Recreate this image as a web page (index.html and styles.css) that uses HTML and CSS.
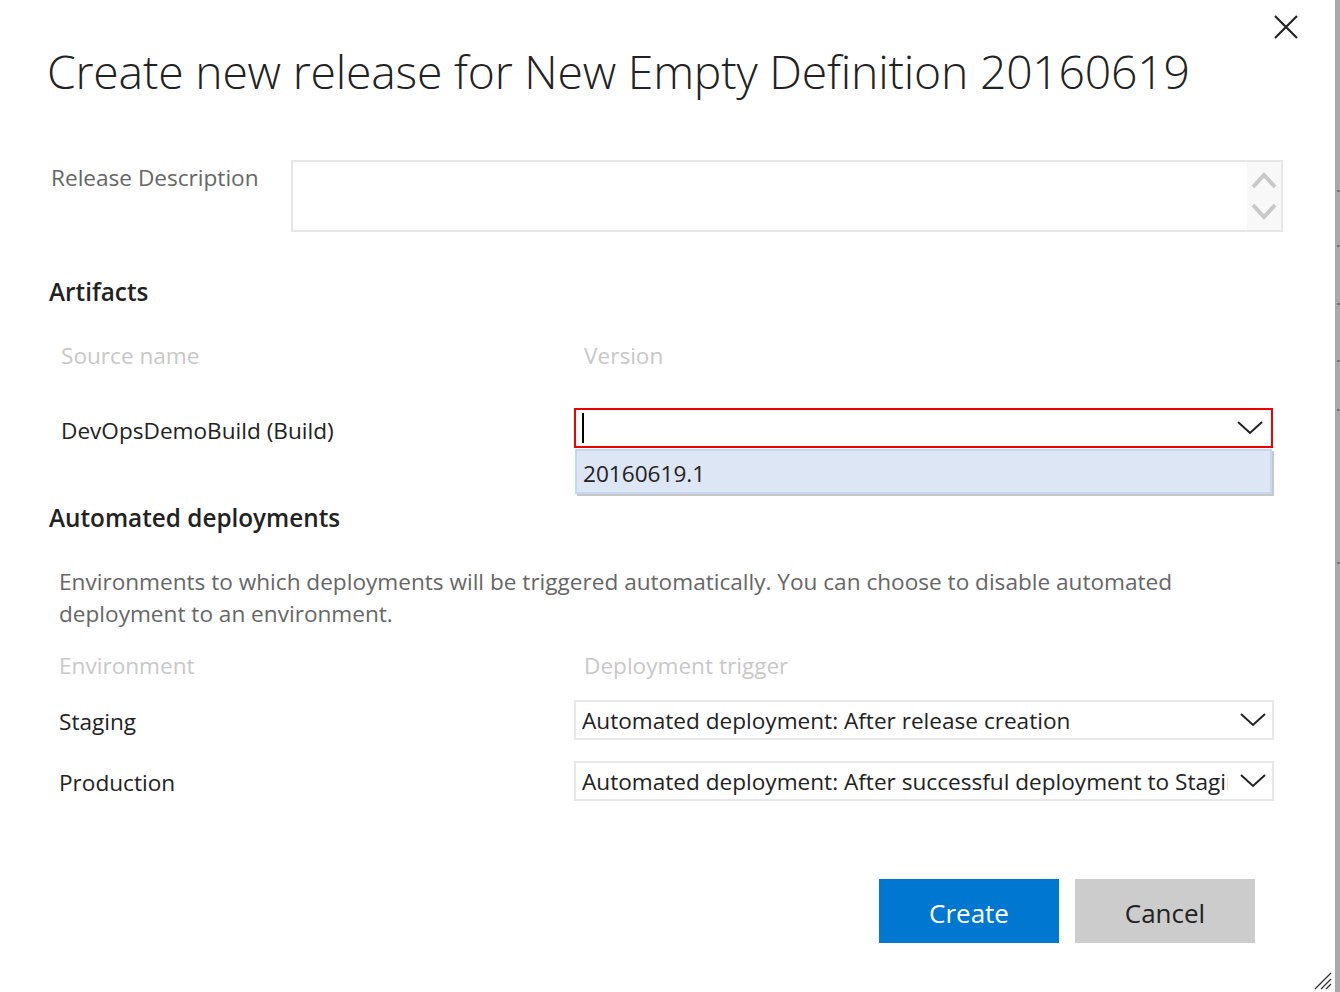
FILE: index.html
```html
<!DOCTYPE html>
<html>
<head>
<meta charset="utf-8">
<link rel="stylesheet" href="styles.css">
</head>
<body>
<div class="page">
  <div class="dialog">
    <button class="close" aria-label="Close">
      <svg width="24" height="24" viewBox="0 0 24 24"><path d="M1 1L23 23M23 1L1 23" stroke="#222" stroke-width="2.2" fill="none"/></svg>
    </button>
    <h1 class="title">Create new release for New Empty Definition 20160619</h1>

    <div class="desc-row">
      <label class="desc-label">Release Description</label>
      <div class="textarea">
        <div class="spin">
          <svg width="26" height="22" viewBox="0 0 26 22"><path d="M2 18L13 6L24 18" stroke="#c9c9c9" stroke-width="4" fill="none"/></svg>
          <svg width="26" height="22" viewBox="0 0 26 22"><path d="M2 4L13 16L24 4" stroke="#c9c9c9" stroke-width="4" fill="none"/></svg>
        </div>
      </div>
    </div>

    <h2 class="section">Artifacts</h2>
    <div class="grid artifacts">
      <div class="colhead">Source name</div>
      <div class="colhead right">Version</div>
      <div class="cell name">DevOpsDemoBuild (Build)</div>
      <div class="cell combo-wrap">
        <div class="combo focused">
          <span class="caret"></span>
          <svg class="chev" width="26" height="14" viewBox="0 0 26 14"><path d="M1 1L13 12L25 1" stroke="#222" stroke-width="2" fill="none"/></svg>
        </div>
        <div class="dropdown"><div class="option">20160619.1</div></div>
      </div>
    </div>

    <h2 class="section auto">Automated deployments</h2>
    <p class="info">Environments to which deployments will be triggered automatically. You can choose to disable automated deployment to an environment.</p>
    <div class="grid envs">
      <div class="colhead">Environment</div>
      <div class="colhead right">Deployment trigger</div>
      <div class="cell name">Staging</div>
      <div class="cell">
        <div class="select"><span class="sel-text">Automated deployment: After release creation</span>
          <svg class="chev" width="26" height="14" viewBox="0 0 26 14"><path d="M1 1L13 12L25 1" stroke="#222" stroke-width="2" fill="none"/></svg>
        </div>
      </div>
      <div class="cell name">Production</div>
      <div class="cell">
        <div class="select"><span class="sel-text">Automated deployment: After successful deployment to Staging</span>
          <svg class="chev" width="26" height="14" viewBox="0 0 26 14"><path d="M1 1L13 12L25 1" stroke="#222" stroke-width="2" fill="none"/></svg>
        </div>
      </div>
    </div>

    <div class="actions">
      <button class="btn primary">Create</button>
      <button class="btn secondary">Cancel</button>
    </div>
    <svg class="grip" width="20" height="20" viewBox="0 0 20 20"><path d="M19 3L3 19M19 9L9 19M19 14L14 19" stroke="#333" stroke-width="1.3" fill="none"/></svg>
  </div>
  <div class="edge"></div>
</div>
</body>
</html>
```

FILE: styles.css
```css
* { box-sizing: border-box; }
html, body { margin: 0; padding: 0; background: #fff; }
body {
  font-family: "Open Sans", "Noto Sans", "Liberation Sans", sans-serif;
  color: #222;
}
.page { display: flex; width: 1340px; height: 992px; overflow: hidden; }
.dialog {
  position: relative;
  flex: 1;
  padding: 0 0 0 49px;
}
.edge {
  width: 5px;
  background-color: #a9a9a9;
  background-image:
    linear-gradient(#777, #777),
    linear-gradient(#777, #777),
    linear-gradient(#777, #777),
    linear-gradient(#777, #777),
    linear-gradient(#777, #777),
    linear-gradient(#777, #777);
  background-size: 3px 2px;
  background-repeat: no-repeat;
  background-position: 2px 190px, 2px 245px, 2px 303px, 2px 360px, 2px 409px, 2px 562px;
}
.close {
  position: absolute;
  top: 15px;
  right: 37px;
  border: 0;
  background: none;
  padding: 0;
  width: 24px;
  height: 24px;
}
.title {
  margin: 0 0 0 -2px;
  padding-top: 39px;
  font-size: 46.3px;
  font-weight: 300;
  line-height: 66px;
  color: #222;
  letter-spacing: -0.2px;
  white-space: nowrap;
}
.desc-row {
  display: flex;
  margin-top: 55px;
}
.desc-label {
  width: 242px;
  padding-left: 2px;
  font-size: 22.6px;
  color: #666;
  line-height: 36px;
}
.textarea {
  width: 992px;
  height: 72px;
  border: 2px solid #e6e6e6;
  display: flex;
  justify-content: flex-end;
}
.spin {
  width: 34px;
  background: #f8f8f8;
  display: flex;
  flex-direction: column;
  align-items: center;
  justify-content: center;
  gap: 10px;
}
.section {
  margin: 0;
  font-size: 24.3px;
  font-weight: 600;
  color: #222;
  line-height: 32px;
}
.desc-row + .section { margin-top: 44px; }
.grid {
  display: grid;
  grid-template-columns: 525px 700px;
}
.artifacts { margin-top: 33px; }
.colhead {
  font-size: 22.6px;
  color: #c8c8c8;
  line-height: 30px;
  padding-left: 12px;
}
.colhead.right { padding-left: 10px; }
.cell { font-size: 22.6px; line-height: 30px; }
.cell.name { padding-left: 12px; }
.artifacts .colhead { margin-bottom: 37px; }
.artifacts .name { padding-top: 8px; }
.combo {
  height: 40px;
  border: 2px solid #ef0000;
  position: relative;
  display: flex;
  align-items: center;
  justify-content: space-between;
  padding: 0 8px 0 6px;
  width: 699px;
}
.caret {
  width: 2px;
  height: 30px;
  background: #000;
}
.chev { display: block; }
.dropdown {
  width: 697px;
  margin-left: 1px;
  margin-top: 1px;
  background: #dde6f4;
  border: 2px solid #c6d6ef;
  box-shadow: 2px 2px 0 #c8c8c8;
  height: 45px;
  padding: 8px 0 0 6px;
}
.option { font-size: 22.6px; line-height: 30px; color: #222; }
.section.auto { margin-top: 8px; }
.info {
  margin: 32px 0 0 0;
  padding-left: 10px;
  font-size: 22.6px;
  color: #666;
  line-height: 32px;
  width: 1150px;
}
.envs { margin-top: 21px; row-gap: 21px; }
.envs .colhead { padding-left: 10px; margin-bottom: -2px; }
.envs .colhead.right { padding-left: 10px; }
.envs .name { padding-left: 10px; padding-top: 7px; }
.select {
  width: 700px;
  height: 40px;
  border: 2px solid #e8e8e8;
  display: flex;
  align-items: center;
  padding: 2px 0 0 6px;
  gap: 12px;
  overflow: hidden;
}
.sel-text {
  flex: 1;
  white-space: nowrap;
  overflow: hidden;
  font-size: 22.6px;
  color: #222;
}
.select .chev { margin-right: 6px; margin-top: -3px; flex: none; }
.actions {
  display: flex;
  gap: 16px;
  justify-content: flex-end;
  padding-right: 80px;
  margin-top: 78px;
}
.btn {
  width: 180px;
  height: 64px;
  border: 0;
  padding: 4px 0 0 0;
  font-family: inherit;
  font-size: 26px;
}
.primary { background: #0078d2; color: #fff; }
.secondary { background: #cccccc; color: #222; }
.grip {
  position: absolute;
  right: 3px;
  bottom: 2px;
}
```
